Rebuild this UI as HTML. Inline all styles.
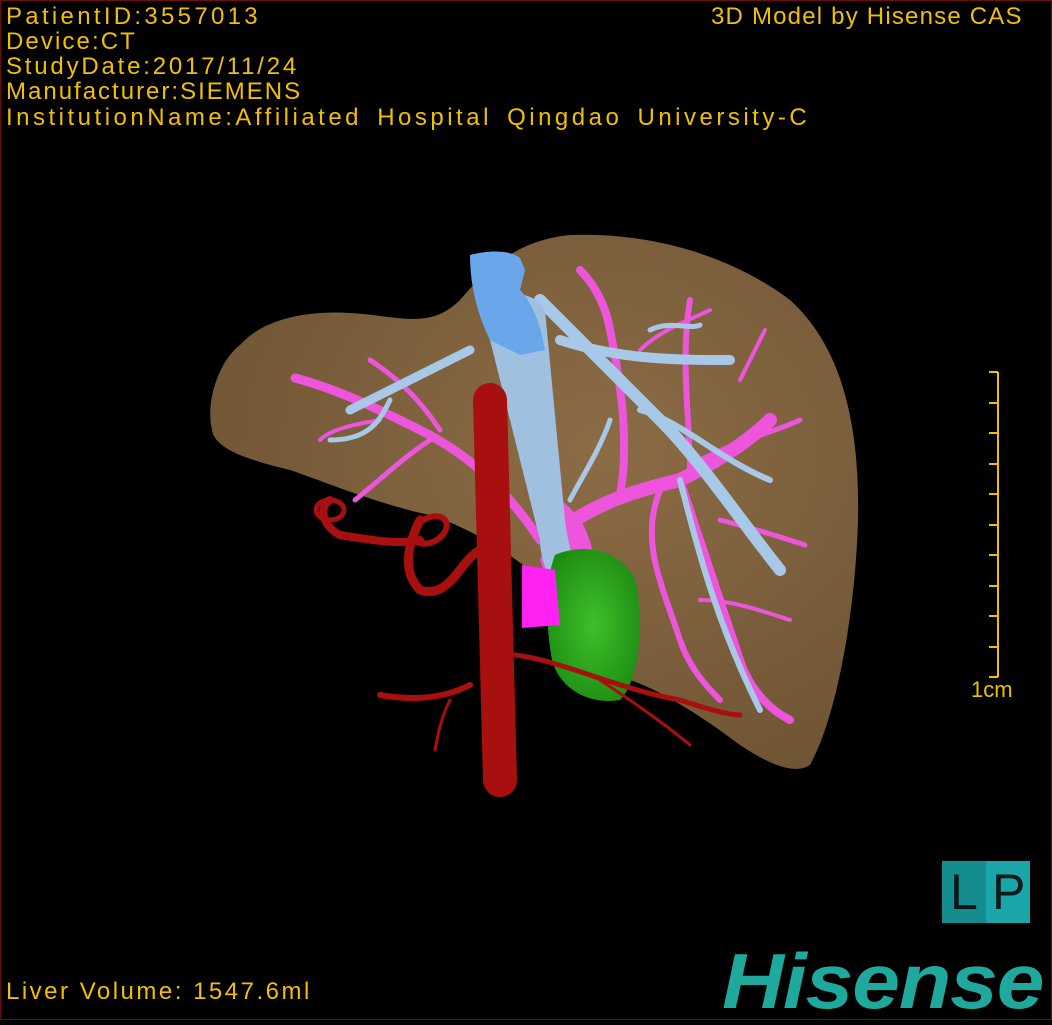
<!DOCTYPE html>
<html><head><meta charset="utf-8"><style>
html,body{margin:0;padding:0;background:#000;}
body{width:1052px;height:1020px;position:relative;overflow:hidden;}
.frame{position:absolute;left:0;top:0;width:1050px;height:1018px;border:1px solid #6a0f0f;}
.t{position:absolute;color:#f0c000;font-family:"Liberation Sans",sans-serif;font-size:24px;line-height:25px;white-space:nowrap;}
.lp{position:absolute;left:942px;top:861px;width:88px;height:62px;background:#1aa5a8;}
.lp .l{position:absolute;left:0;top:0;width:44px;height:62px;background:#138d90;}
.lp span{position:absolute;top:2px;font-family:"Liberation Sans",sans-serif;font-size:50px;color:#0a1a1a;line-height:58px;}
.hs{position:absolute;left:722px;top:942px;font-family:"Liberation Sans",sans-serif;font-weight:bold;font-style:italic;font-size:78px;color:#1fa99c;letter-spacing:-1px;line-height:78px;transform:scaleX(1.1);transform-origin:left top;}
</style></head><body>
<svg width="1052" height="1020" style="position:absolute;left:0;top:0">
<defs>
<radialGradient id="lv" cx="0.6" cy="0.4" r="0.7"><stop offset="0" stop-color="#8c6c45"/><stop offset="1" stop-color="#6e5434"/></radialGradient>
<radialGradient id="gb" cx="0.5" cy="0.5" r="0.6"><stop offset="0" stop-color="#3fbf2a"/><stop offset="1" stop-color="#1c8a12"/></radialGradient>
</defs>
<path d="M212,430 C205,400 220,360 240,345 C260,322 300,310 350,313 C400,316 430,330 460,300 C490,265 520,240 570,235 C650,232 730,255 790,300 C840,345 860,420 858,520 C855,620 835,720 810,765 C795,775 770,765 740,745 C700,715 660,690 630,680 C590,650 560,600 530,570 C490,540 460,525 430,515 C380,505 320,480 290,470 C250,460 215,450 212,430 Z" fill="url(#lv)"/>
<g fill="none" stroke="#ee55dd" stroke-linecap="round">
<path d="M560,530 C600,500 640,490 680,480 C720,460 750,440 770,420" stroke-width="14"/>
<path d="M540,540 C500,480 460,450 420,430 C380,410 340,390 295,378" stroke-width="9"/>
<path d="M620,495 C630,440 620,380 610,330 C605,300 590,280 580,270" stroke-width="8"/>
<path d="M680,480 C700,540 720,600 740,660 C750,690 770,710 790,720" stroke-width="8"/>
<path d="M660,490 C640,540 660,580 680,640 C690,670 710,690 720,700" stroke-width="6"/>
<path d="M690,470 C690,420 680,360 690,300" stroke-width="6"/>
<path d="M700,460 C740,440 780,430 800,420" stroke-width="5"/>
<path d="M720,520 C760,530 790,540 805,545" stroke-width="5"/>
<path d="M430,440 C400,460 380,480 355,500" stroke-width="5"/>
<path d="M440,430 C420,400 400,380 370,360" stroke-width="5"/>
<path d="M380,420 C350,425 330,430 320,440" stroke-width="4"/>
<path d="M640,350 C660,330 690,320 710,310" stroke-width="4"/>
<path d="M740,380 C750,360 760,340 765,330" stroke-width="4"/>
<path d="M700,600 C730,600 760,610 790,620" stroke-width="4"/>
</g>
<path d="M560,500 C590,520 600,560 590,590 L555,600 L540,560 Z" fill="#ee55dd"/>
<g fill="none" stroke="#a8c8e8" stroke-linecap="round">
<path d="M540,300 C580,340 620,380 660,420 C700,460 740,520 780,570" stroke-width="12"/>
<path d="M560,340 C620,360 680,360 730,360" stroke-width="10"/>
<path d="M470,350 C430,370 390,390 350,410" stroke-width="9"/>
<path d="M640,410 C680,420 720,460 770,480" stroke-width="6"/>
<path d="M680,480 C700,560 720,630 760,710" stroke-width="6"/>
<path d="M610,420 C600,450 580,480 570,500" stroke-width="5"/>
<path d="M650,330 C670,320 690,330 700,325" stroke-width="5"/>
<path d="M390,400 C380,420 370,440 330,440" stroke-width="5"/>
</g>
<path d="M485,300 C500,290 535,290 545,310 L565,520 C570,560 580,580 595,595 L560,598 C550,580 540,560 540,540 L490,340 Z" fill="#a0c0e0"/>
<path d="M470,255 C490,250 510,250 520,258 L525,270 L520,290 C530,300 540,320 545,350 L520,355 L490,340 C480,320 470,290 470,255 Z" fill="#6aa6ea"/>
<path d="M555,555 C590,540 625,555 635,580 C645,620 640,680 620,700 C590,705 560,690 552,660 C545,620 545,580 555,555 Z" fill="url(#gb)"/>
<path d="M522,565 L555,570 L560,625 L522,628 Z" fill="#ff22f0"/>
<g fill="none" stroke="#a80f0f" stroke-linecap="round">
<path d="M490,400 L500,780" stroke-width="34"/>
<path d="M480,550 C460,560 450,600 420,590 C400,570 410,540 420,520" stroke-width="9"/>
<path d="M420,540 C400,545 370,540 340,535 C320,525 320,505 330,500" stroke-width="8"/>
<path d="M470,685 C440,700 410,700 380,695" stroke-width="6"/>
<path d="M515,655 C560,660 620,690 680,700 C710,710 730,715 740,715" stroke-width="5"/>
<path d="M600,680 C630,700 660,720 690,745" stroke-width="3"/>
<path d="M450,700 C440,720 438,735 435,750" stroke-width="3"/>
</g>
<ellipse cx="330" cy="510" rx="14" ry="10" fill="none" stroke="#a80f0f" stroke-width="5"/>
<ellipse cx="430" cy="530" rx="18" ry="12" fill="none" stroke="#a80f0f" stroke-width="6" transform="rotate(-30 430 530)"/>
<g stroke="#f0c000" stroke-width="2">
<line x1="998" y1="372" x2="998" y2="677"/>
<line x1="989" y1="372" x2="998" y2="372"/><line x1="989" y1="403" x2="998" y2="403"/><line x1="989" y1="433" x2="998" y2="433"/><line x1="989" y1="464" x2="998" y2="464"/><line x1="989" y1="494" x2="998" y2="494"/><line x1="989" y1="525" x2="998" y2="525"/><line x1="989" y1="555" x2="998" y2="555"/><line x1="989" y1="586" x2="998" y2="586"/><line x1="989" y1="616" x2="998" y2="616"/><line x1="989" y1="647" x2="998" y2="647"/><line x1="989" y1="677" x2="998" y2="677"/>
</g>
</svg>
<div class="frame"></div>
<div class="t" style="left:6px;top:4px;letter-spacing:3.3px">PatientID:3557013</div>
<div class="t" style="left:6px;top:29px;letter-spacing:2.1px">Device:CT</div>
<div class="t" style="left:6px;top:54px;letter-spacing:2.8px">StudyDate:2017/11/24</div>
<div class="t" style="left:6px;top:79px;letter-spacing:2px">Manufacturer:SIEMENS</div>
<div class="t" style="left:6px;top:105px;letter-spacing:3.5px;word-spacing:5px">InstitutionName:Affiliated Hospital Qingdao University-C</div>
<div class="t" style="left:711px;top:4px;letter-spacing:1.2px">3D Model by Hisense CAS</div>
<div class="t" style="left:971px;top:677px;font-size:22px">1cm</div>
<div class="t" style="left:6px;top:979px;letter-spacing:2.5px">Liver Volume: 1547.6ml</div>
<div class="lp"><div class="l"></div><span style="left:8px">L</span><span style="left:50px">P</span></div>
<div class="hs">Hisense</div>
</body></html>
